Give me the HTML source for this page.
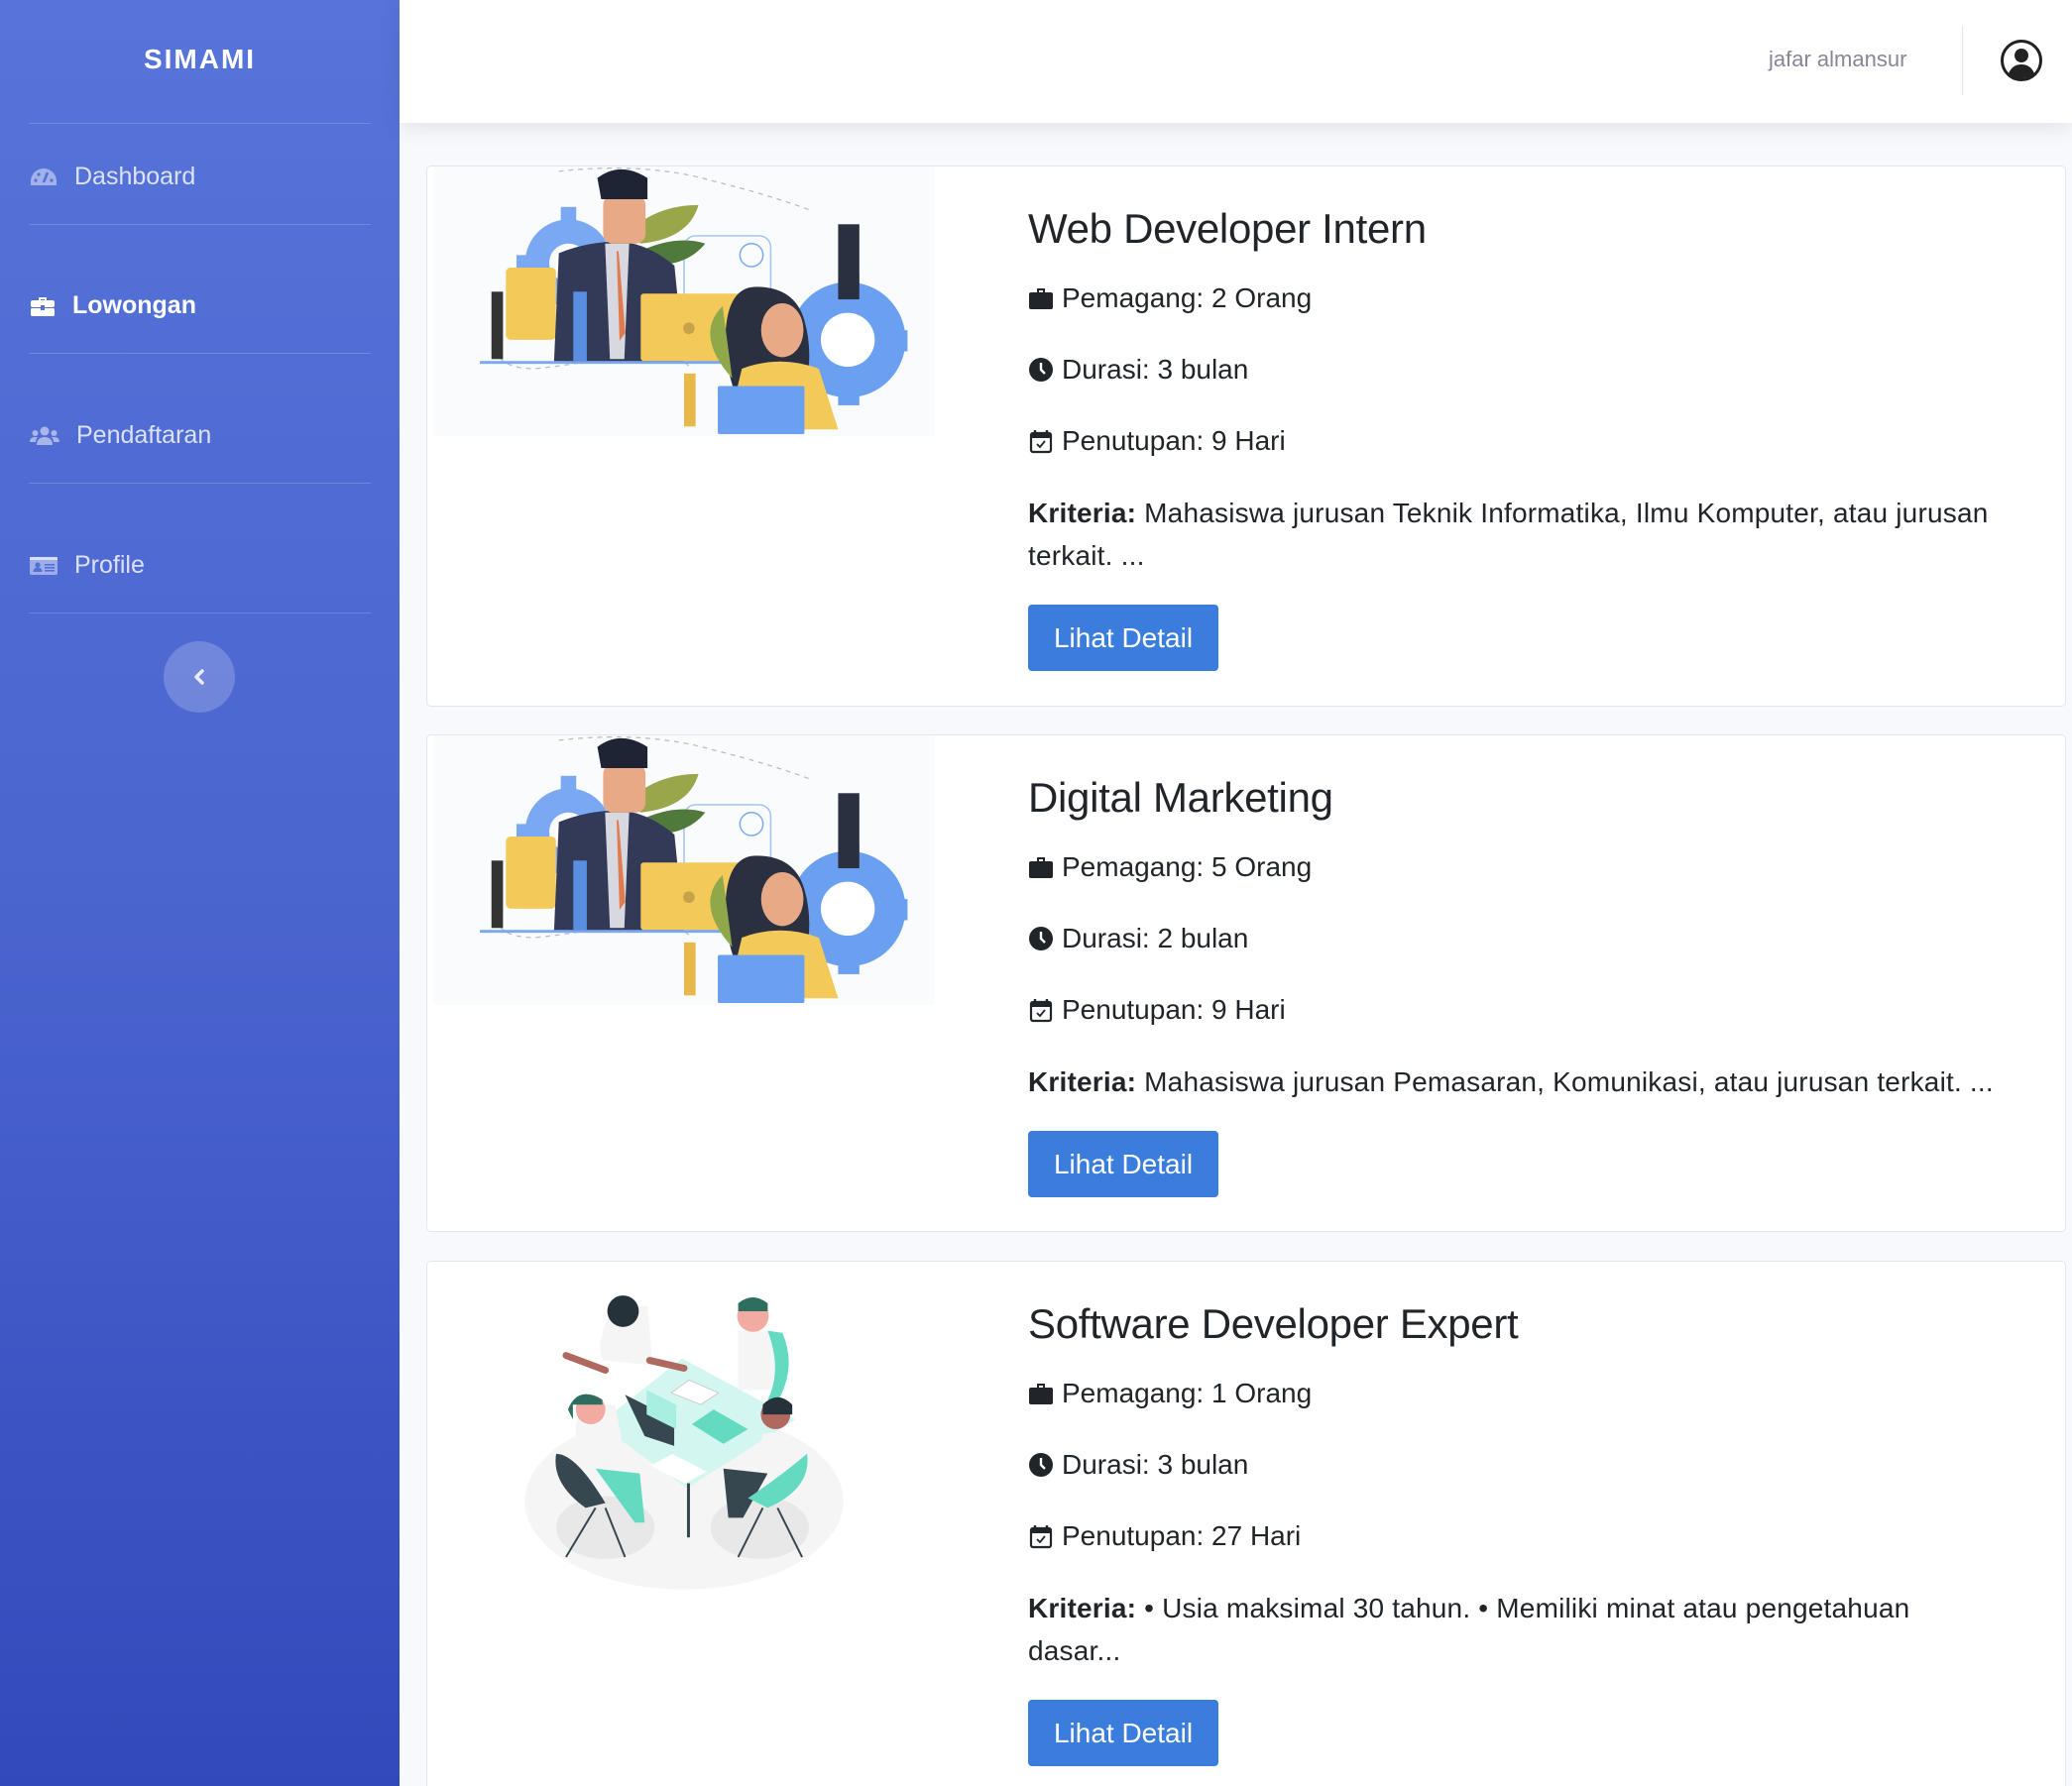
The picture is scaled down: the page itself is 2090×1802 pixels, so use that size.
<!DOCTYPE html>
<html><head><meta charset="utf-8"><style>
*{box-sizing:border-box;margin:0;padding:0}
html,body{width:2090px;height:1802px;overflow:hidden}
body{background:#f8f9fc;font-family:"Liberation Sans",sans-serif;position:relative}
#wrap{position:absolute;left:0;top:0;width:2090px;height:1802px;overflow:hidden}
.sb{position:absolute;left:0;top:0;width:403px;height:1802px;background:linear-gradient(180deg,#5674da 0%,#4b65cf 50%,#3249bb 100%)}
.brand{position:absolute;left:0;width:403px;top:44px;text-align:center;color:#fff;font-weight:bold;font-size:28px;letter-spacing:2px}
.hr{position:absolute;left:29px;width:345px;height:1px;background:rgba(255,255,255,.18)}
.nav{position:absolute;left:30px;color:rgba(255,255,255,.8);font-size:25px;display:flex;align-items:center}
.nav svg{margin-right:17px}
.nav.act{color:#fff;font-weight:bold}
.tog{position:absolute;left:165px;top:647px;width:72px;height:72px;border-radius:50%;background:rgba(255,255,255,.2)}
.top{position:absolute;left:403px;top:0;width:1687px;height:124px;background:#fff;box-shadow:0 4px 20px rgba(58,59,69,.12)}
.user{position:absolute;left:1381px;top:47px;color:#858796;font-size:22px}
.vd{position:absolute;left:1576px;top:26px;width:1px;height:70px;background:#e3e6f0}
.card{position:absolute;left:430px;width:1654px;background:#fff;border:1px solid #e3e6f0;border-radius:5px;overflow:hidden}
.img{position:absolute;left:1px;top:0;width:516px}
.tx{position:absolute;left:606px;color:#212529}
.t{font-size:42px;line-height:50px;letter-spacing:-.3px}
.l{font-size:28px;line-height:34px;display:flex;align-items:center;position:absolute;left:0;white-space:nowrap}
.l svg{margin-right:8px}
.k{position:absolute;left:0;width:1000px;font-size:28px;line-height:43px;letter-spacing:.2px}
.btn{position:absolute;left:0;width:192px;height:67px;background:#3b7ddd;border-radius:4px;color:#fff;font-size:28px;line-height:67px;text-align:center}
</style></head><body><div id="wrap">
<div class="sb">
<div class="brand">SIMAMI</div>
<div class="hr" style="top:124px"></div>
<div class="hr" style="top:226px"></div>
<div class="hr" style="top:356px"></div>
<div class="hr" style="top:487px"></div>
<div class="hr" style="top:618px"></div>
<div class="nav" style="top:164px"><svg width="28" height="20" viewBox="0 0 28 20"><path d="M14 1A13 13 0 0 0 1 14v4h26v-4A13 13 0 0 0 14 1z" fill="rgba(255,255,255,.45)"/><circle cx="6" cy="13" r="1.6" fill="#5270d8"/><circle cx="9" cy="7" r="1.6" fill="#5270d8"/><circle cx="22" cy="13" r="1.6" fill="#5270d8"/><path d="M14 15L18 5" stroke="#5270d8" stroke-width="2.5"/></svg>Dashboard</div>
<div class="nav act" style="top:294px"><svg width="26" height="22" viewBox="0 0 26 22"><path d="M9 2h8v3h-2V4h-4v1H9z" fill="#fff"/><rect x="1" y="5" width="24" height="7" rx="2" fill="#fff"/><rect x="1" y="13" width="24" height="8" rx="1.5" fill="#fff"/><rect x="11" y="10" width="4" height="5" fill="#5270d8"/></svg>Lowongan</div>
<div class="nav" style="top:425px"><svg width="30" height="20" viewBox="0 0 30 20"><g fill="rgba(255,255,255,.5)"><circle cx="15" cy="5" r="4.5"/><circle cx="5.5" cy="7" r="3"/><circle cx="24.5" cy="7" r="3"/><path d="M7 19c0-5 3-8 8-8s8 3 8 8z"/><path d="M0 16c0-3 2-5 5-5h3c-1.5 1.5-2 3-2 5z"/><path d="M30 16c0-3-2-5-5-5h-3c1.5 1.5 2 3 2 5z"/></g></svg>Pendaftaran</div>
<div class="nav" style="top:556px"><svg width="28" height="20" viewBox="0 0 28 20"><rect x="0" y="1" width="28" height="18" rx="2" fill="rgba(255,255,255,.45)"/><rect x="0" y="1" width="28" height="3" fill="rgba(255,255,255,.6)"/><circle cx="8" cy="9" r="2.6" fill="#5270d8"/><path d="M3.5 16c0-3 2-4.5 4.5-4.5s4.5 1.5 4.5 4.5z" fill="#5270d8"/><rect x="15" y="8" width="10" height="1.6" fill="#5270d8"/><rect x="15" y="11" width="10" height="1.6" fill="#5270d8"/><rect x="15" y="14" width="10" height="1.6" fill="#5270d8"/></svg>Profile</div>
<div class="tog"><svg width="72" height="72" viewBox="0 0 72 72"><path d="M39 30l-6 6 6 6" stroke="rgba(255,255,255,.85)" stroke-width="3.5" fill="none" stroke-linecap="round" stroke-linejoin="round"/></svg></div>
</div>
<div class="top">
<div class="user">jafar almansur</div>
<div class="vd"></div>
<svg style="position:absolute;left:1614px;top:39px" width="44" height="44" viewBox="0 0 44 44"><circle cx="22" cy="22" r="19.5" fill="none" stroke="#222" stroke-width="3"/><circle cx="22" cy="17" r="7" fill="#222"/><path d="M9 35c3-7 8-9 13-9s10 2 13 9c-4 4-8 5-13 5s-9-1-13-5z" fill="#222"/></svg>
</div>

<svg width="0" height="0" style="position:absolute"><defs>
<g id="ill">
<rect width="520" height="280" fill="#fafbfc"/>
<path d="M65 170q-10 40 40 40 50-5 90-15 40-10 70 12M130 5q90-10 160 10 60 15 100 30" stroke="#bbb" stroke-width="1.3" stroke-dasharray="5 5" fill="none"/>
<circle cx="140" cy="100" r="45" fill="#7aa8f2"/><circle cx="140" cy="100" r="20" fill="#fafbfc"/>
<g fill="#7aa8f2"><rect x="132" y="42" width="16" height="14"/><rect x="86" y="92" width="14" height="16"/></g>
<rect x="260" y="72" width="90" height="130" rx="12" fill="none" stroke="#9fc0f5" stroke-width="1.5"/>
<circle cx="330" cy="92" r="12" fill="none" stroke="#7aa8f2" stroke-width="1.5"/>
<circle cx="430" cy="180" r="60" fill="#6b9ff0"/><circle cx="430" cy="180" r="28" fill="#fff"/>
<g fill="#6b9ff0"><rect x="420" y="112" width="22" height="14"/><rect x="478" y="170" width="14" height="22"/><rect x="420" y="234" width="22" height="14"/></g>
<path d="M200 70q30-30 75-30-10 35-60 40z" fill="#9aa64a"/><path d="M210 90q40-20 72-10-20 25-60 22z" fill="#4f7a3b"/>
<rect x="75" y="105" width="52" height="75" rx="5" fill="#f3c95a"/>
<path d="M130 90q30-12 60-12 30 0 60 25l10 100H125z" fill="#323a58"/>
<path d="M178 80h25l-5 120h-15z" fill="#d8d9e0"/><path d="M192 88l7 85-6 8-3-93z" fill="#e07a4f"/>
<rect x="176" y="30" width="44" height="50" rx="10" fill="#e8a986"/><path d="M170 12q24-18 52 0v22h-48z" fill="#1e2433"/>
<rect x="215" y="132" width="105" height="70" rx="3" fill="#f3c95a"/><circle cx="265" cy="168" r="6" fill="#c8a24a"/>
<rect x="48" y="202" width="265" height="3" fill="#7aa8f2"/>
<path d="M335 125q-30 0-32 50 0 35 10 60h72q10-40 0-75-10-35-50-35z" fill="#2a3040"/>
<ellipse cx="362" cy="170" rx="22" ry="28" fill="#e8a986"/>
<path d="M300 145q-30 30 10 75" fill="#8fa84a"/>
<path d="M320 210q40-15 80 0l20 63H305z" fill="#f3c95a"/>
<rect x="295" y="228" width="90" height="50" rx="2" fill="#6b9ff0"/>
<g fill="#333"><rect x="60" y="130" width="12" height="70"/><rect x="145" y="130" width="14" height="72" fill="#5a8ee0"/><rect x="260" y="215" width="12" height="55" fill="#e8b94a"/><rect x="420" y="60" width="22" height="78" fill="#2a3040"/></g>
</g>
<g id="ill2">
<rect width="520" height="345" fill="#fff"/>
<ellipse cx="260" cy="243" rx="162" ry="90" fill="#f5f5f5"/>
<ellipse cx="180" cy="270" rx="50" ry="32" fill="#e8e8e8"/><ellipse cx="337" cy="270" rx="50" ry="32" fill="#e8e8e8"/>
<path d="M258 98l115 62-110 70-90-65z" fill="#d3f7f0"/>
<rect x="263" y="225" width="3" height="55" fill="#37474f"/>
<path d="M178 100q-10-15 10-55h35l5 60z" fill="#f5f5f5"/><circle cx="198" cy="50" r="16" fill="#26323a"/>
<path d="M140 95l40 15M225 100l35 8" stroke="#b0695f" stroke-width="7" stroke-linecap="round"/>
<path d="M315 70h40l5 60h-45z" fill="#f5f5f5"/><circle cx="330" cy="55" r="16" fill="#f2aba0"/><path d="M315 42q15-12 30 0v8h-30z" fill="#2e6e5e"/>
<path d="M345 70q15 40 0 70l10 2q20-35 5-70z" fill="#64dbc1"/>
<path d="M150 170q0-20 25-25h15l10 55h-50z" fill="#f5f5f5"/><circle cx="165" cy="150" r="15" fill="#f2aba0"/><path d="M142 150q10-25 35-10v5h-30v15z" fill="#2e6e5e"/>
<path d="M130 195q20 0 50 50l-20 5q-35-25-30-55z" fill="#37474f"/><path d="M170 210l45 5 5 50h-10z" fill="#64dbc1"/>
<path d="M340 175q20-5 30 10v40h-40z" fill="#f5f5f5"/><circle cx="353" cy="155" r="15" fill="#b0695f"/><path d="M340 145q15-15 30 0v10h-30z" fill="#26323a"/>
<path d="M300 210l45 5-25 45h-15z" fill="#37474f"/><path d="M385 195q5 35-40 55l-20-10q30-20 60-45z" fill="#64dbc1"/>
<path d="M200 135l50 25 0 27-30-10z" fill="#37474f"/><path d="M222 130l30 15v25l-30-15z" fill="#a8eee1"/>
<path d="M290 150l35 20-25 15-32-20z" fill="#64dbc1"/><path d="M248 195l35 18-22 12-35-18z" fill="#fff"/>
<path d="M265 120l30 13-18 12-30-12z" fill="#fff" stroke="#ccc"/>
<path d="M170 250l-30 50M180 250l20 50M340 250l-25 50M355 250l25 50" stroke="#37474f" stroke-width="2"/>
</g>
</defs></svg>

<div class="card" style="top:167px;height:546px">
<svg class="img" width="516" height="272" viewBox="0 0 520 280"><use href="#ill"/></svg>
<div class="tx" style="top:38px">
<div class="t">Web Developer Intern</div>
<div class="l" style="top:78px"><svg width="26" height="24" viewBox="0 0 26 24"><path d="M9 2h8v4h-2V4h-4v2H9z" fill="#212529"/><rect x="1" y="6" width="24" height="17" rx="2" fill="#212529"/></svg>Pemagang: 2 Orang</div>
<div class="l" style="top:150px"><svg width="26" height="26" viewBox="0 0 26 26"><circle cx="13" cy="13" r="12" fill="#212529"/><path d="M13 6v7l4 4" stroke="#fff" stroke-width="2.4" fill="none"/></svg>Durasi: 3 bulan</div>
<div class="l" style="top:222px"><svg width="26" height="26" viewBox="0 0 26 26"><rect x="3" y="5" width="20" height="19" rx="2" fill="none" stroke="#212529" stroke-width="2.2"/><rect x="3" y="5" width="20" height="5" fill="#212529"/><path d="M7 2v5M19 2v5" stroke="#212529" stroke-width="2.4"/><path d="M9 16l3 3 5-6" stroke="#212529" stroke-width="1.8" fill="none"/></svg>Penutupan: 9 Hari</div>
<div class="k" style="top:290px"><b>Kriteria:</b> Mahasiswa jurusan Teknik Informatika, Ilmu Komputer, atau jurusan terkait. ...</div>
<div class="btn" style="top:404px">Lihat Detail</div>
</div></div>

<div class="card" style="top:741px;height:502px">
<svg class="img" width="516" height="272" viewBox="0 0 520 280"><use href="#ill"/></svg>
<div class="tx" style="top:38px">
<div class="t">Digital Marketing</div>
<div class="l" style="top:78px"><svg width="26" height="24" viewBox="0 0 26 24"><path d="M9 2h8v4h-2V4h-4v2H9z" fill="#212529"/><rect x="1" y="6" width="24" height="17" rx="2" fill="#212529"/></svg>Pemagang: 5 Orang</div>
<div class="l" style="top:150px"><svg width="26" height="26" viewBox="0 0 26 26"><circle cx="13" cy="13" r="12" fill="#212529"/><path d="M13 6v7l4 4" stroke="#fff" stroke-width="2.4" fill="none"/></svg>Durasi: 2 bulan</div>
<div class="l" style="top:222px"><svg width="26" height="26" viewBox="0 0 26 26"><rect x="3" y="5" width="20" height="19" rx="2" fill="none" stroke="#212529" stroke-width="2.2"/><rect x="3" y="5" width="20" height="5" fill="#212529"/><path d="M7 2v5M19 2v5" stroke="#212529" stroke-width="2.4"/><path d="M9 16l3 3 5-6" stroke="#212529" stroke-width="1.8" fill="none"/></svg>Penutupan: 9 Hari</div>
<div class="k" style="top:290px;width:1040px"><b>Kriteria:</b> Mahasiswa jurusan Pemasaran, Komunikasi, atau jurusan terkait. ...</div>
<div class="btn" style="top:361px">Lihat Detail</div>
</div></div>

<div class="card" style="top:1272px;height:560px">
<svg class="img" width="516" height="343" viewBox="0 0 520 345"><use href="#ill2"/></svg>
<div class="tx" style="top:38px">
<div class="t">Software Developer Expert</div>
<div class="l" style="top:78px"><svg width="26" height="24" viewBox="0 0 26 24"><path d="M9 2h8v4h-2V4h-4v2H9z" fill="#212529"/><rect x="1" y="6" width="24" height="17" rx="2" fill="#212529"/></svg>Pemagang: 1 Orang</div>
<div class="l" style="top:150px"><svg width="26" height="26" viewBox="0 0 26 26"><circle cx="13" cy="13" r="12" fill="#212529"/><path d="M13 6v7l4 4" stroke="#fff" stroke-width="2.4" fill="none"/></svg>Durasi: 3 bulan</div>
<div class="l" style="top:222px"><svg width="26" height="26" viewBox="0 0 26 26"><rect x="3" y="5" width="20" height="19" rx="2" fill="none" stroke="#212529" stroke-width="2.2"/><rect x="3" y="5" width="20" height="5" fill="#212529"/><path d="M7 2v5M19 2v5" stroke="#212529" stroke-width="2.4"/><path d="M9 16l3 3 5-6" stroke="#212529" stroke-width="1.8" fill="none"/></svg>Penutupan: 27 Hari</div>
<div class="k" style="top:290px;width:960px"><b>Kriteria:</b> • Usia maksimal 30 tahun. • Memiliki minat atau pengetahuan dasar...</div>
<div class="btn" style="top:404px">Lihat Detail</div>
</div></div>
</div></body></html>
